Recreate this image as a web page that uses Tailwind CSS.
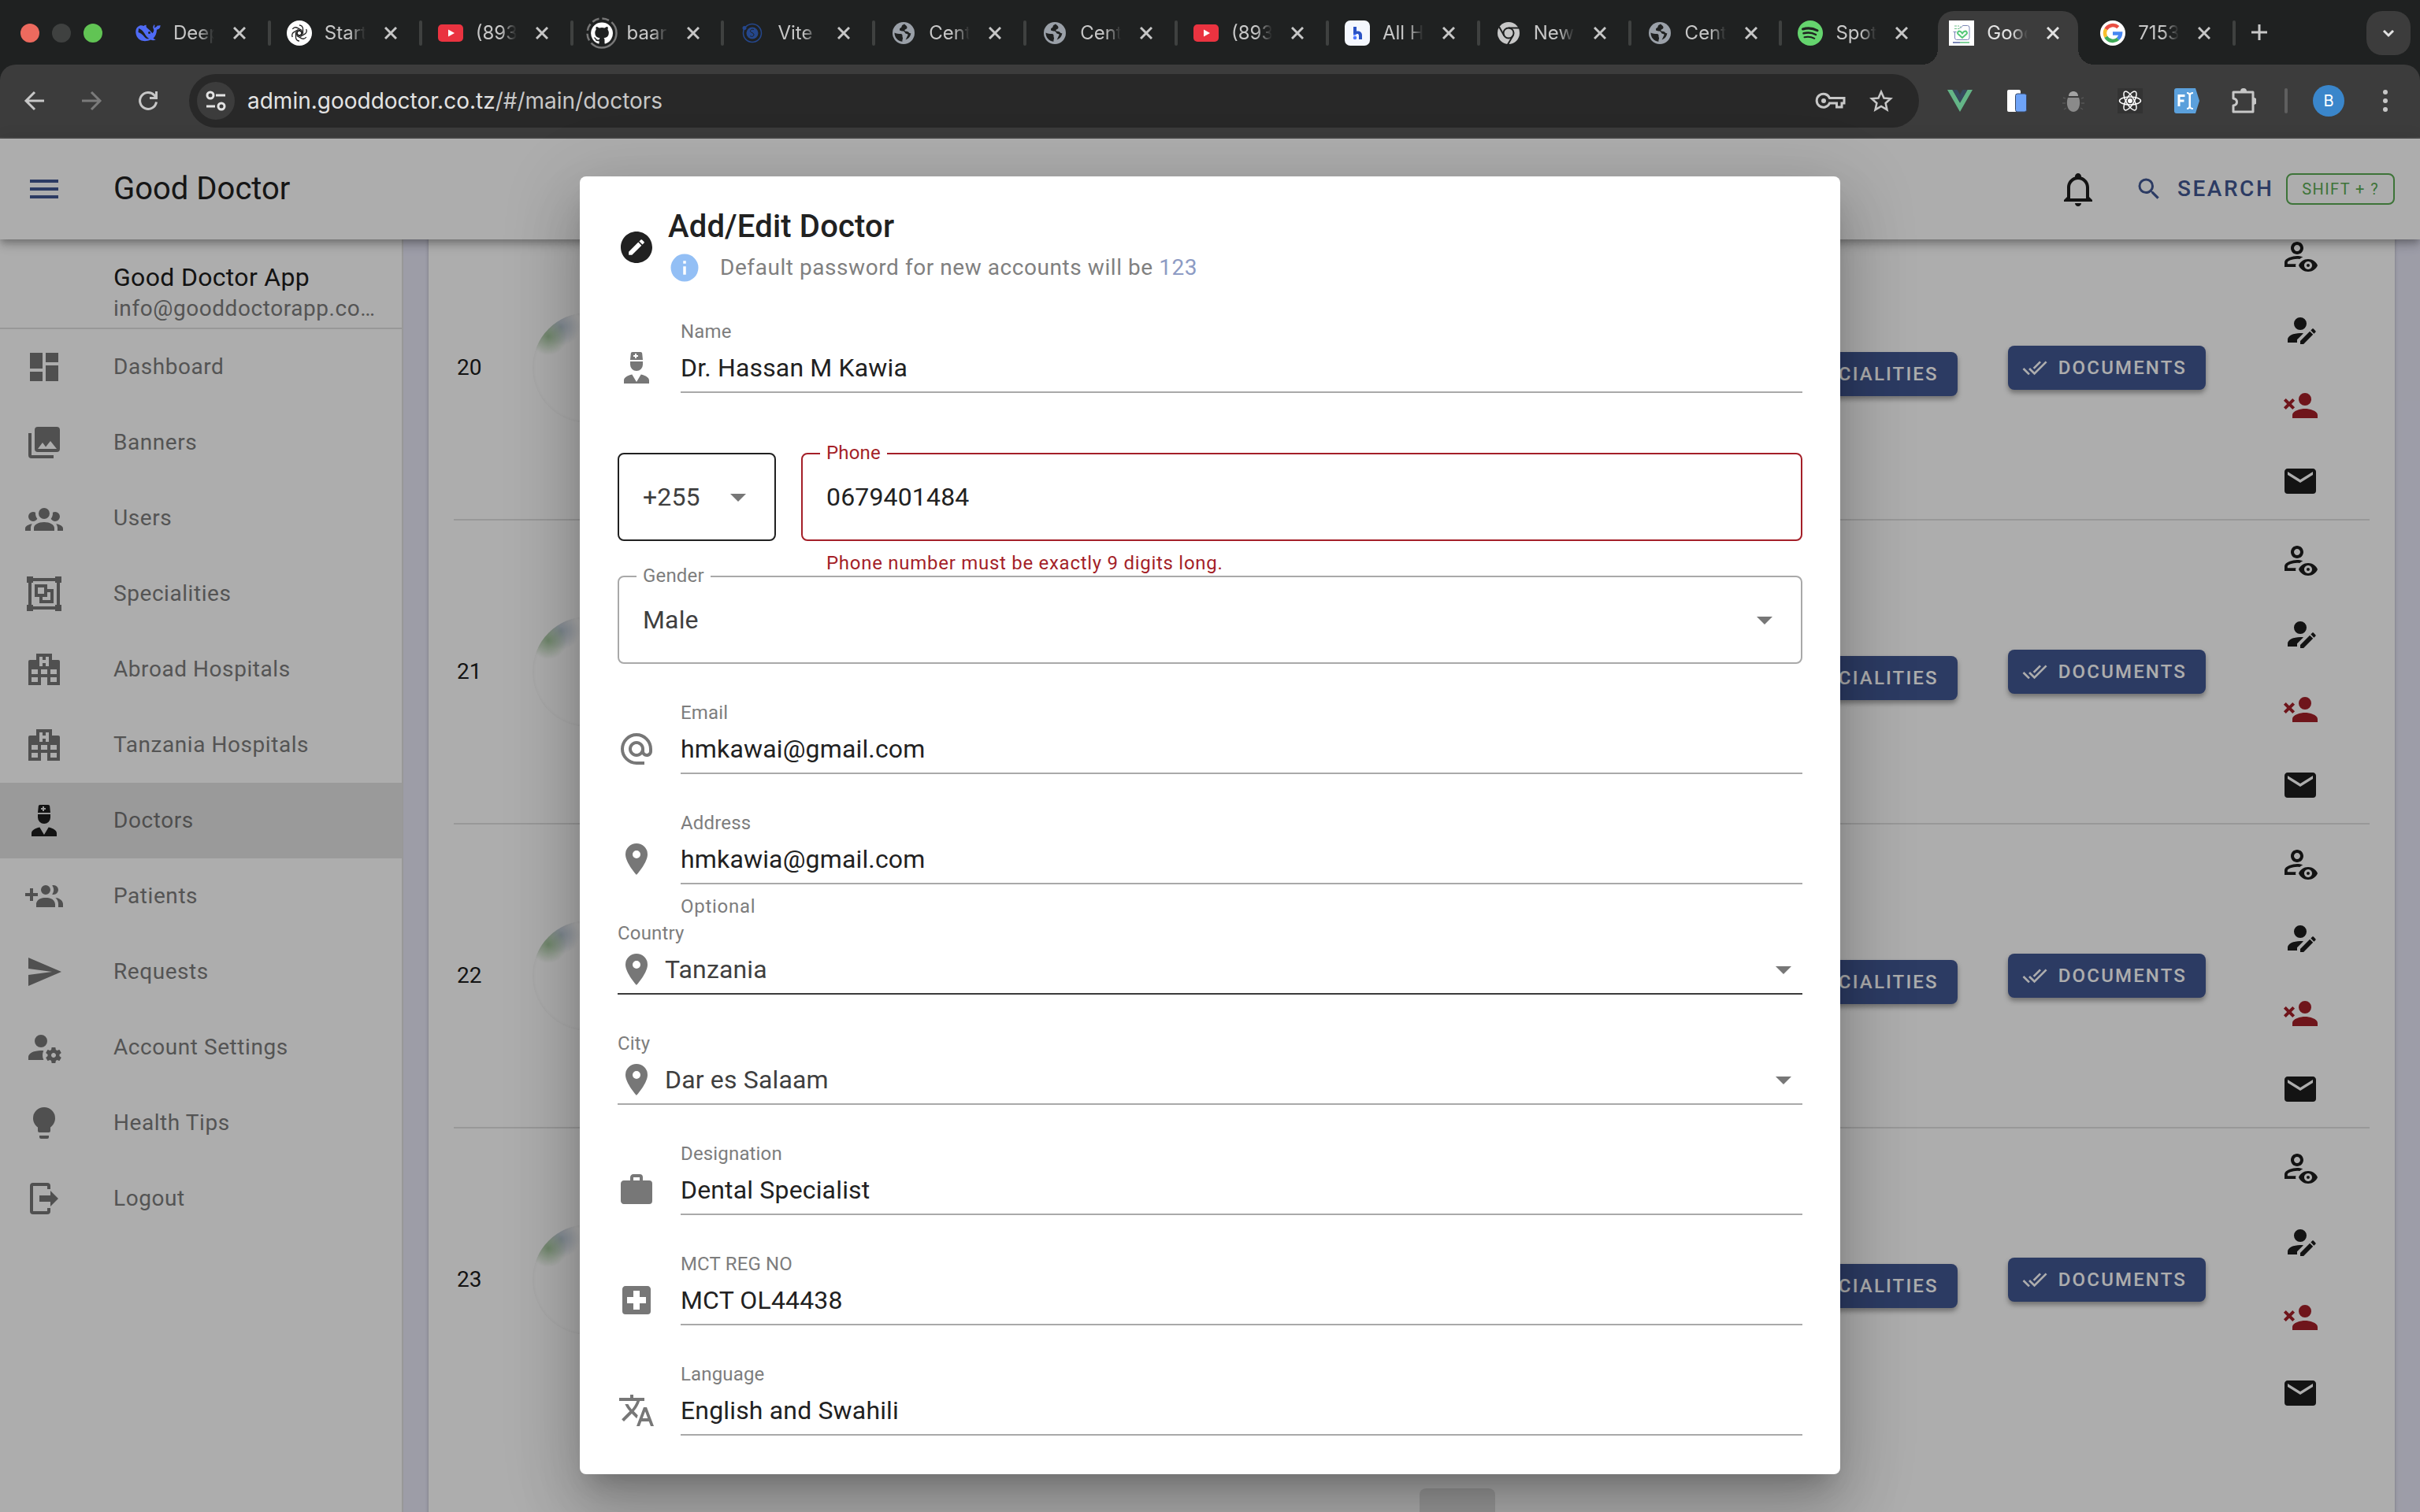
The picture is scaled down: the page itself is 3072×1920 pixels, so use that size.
<!DOCTYPE html>
<html lang="en">

<head>
  <meta charset="UTF-8">
  <meta name="viewport" content="width=device-width, initial-scale=1.0">
  <title>Good Doctor</title>
  <script src="https://cdn.jsdelivr.net/npm/@tailwindcss/browser@4"></script>
</head>

<body class="flex h-screen flex-col overflow-hidden bg-[#1f2121] font-['Roboto',sans-serif]">

  <!-- Icon sprite -->
  <svg class="hidden" aria-hidden="true">
    <symbol id="menu" viewBox="0 0 24 24"><path d="M3,6H21V8H3V6M3,11H21V13H3V11M3,16H21V18H3V16Z" /></symbol>
    <symbol id="bell" viewBox="0 0 24 24"><path d="M10 21H14C14 22.1 13.1 23 12 23S10 22.1 10 21M21 19V20H3V19L5 17V11C5 7.9 7.03 5.17 10 4.29C10 4.19 10 4.1 10 4C10 2.9 10.9 2 12 2S14 2.9 14 4C14 4.1 14 4.19 14 4.29C16.97 5.17 19 7.9 19 11V17L21 19M17 11C17 8.24 14.76 6 12 6S7 8.24 7 11V18H17V11Z" /></symbol>
    <symbol id="magnify" viewBox="0 0 24 24"><path d="M9.5,3A6.5,6.5 0 0,1 16,9.5C16,11.11 15.41,12.59 14.44,13.73L14.71,14H15.5L20.5,19L19,20.5L14,15.5V14.71L13.73,14.44C12.59,15.41 11.11,16 9.5,16A6.5,6.5 0 0,1 3,9.5A6.5,6.5 0 0,1 9.5,3M9.5,5C7,5 5,7 5,9.5C5,12 7,14 9.5,14C12,14 14,12 14,9.5C14,7 12,5 9.5,5Z" /></symbol>
    <symbol id="dashboard" viewBox="0 0 24 24"><path d="M13,3V9H21V3M13,21H21V11H13M3,21H11V15H3M3,13H11V3H3V13Z" /></symbol>
    <symbol id="images" viewBox="0 0 24 24"><path d="M22,16V4A2,2 0 0,0 20,2H8A2,2 0 0,0 6,4V16A2,2 0 0,0 8,18H20A2,2 0 0,0 22,16M11,12L13.03,14.71L16,11L20,16H8M2,6V20A2,2 0 0,0 4,22H18V20H4V6" /></symbol>
    <symbol id="users" viewBox="0 0 24 24"><path d="M12,5.5A3.5,3.5 0 0,1 15.5,9A3.5,3.5 0 0,1 12,12.5A3.5,3.5 0 0,1 8.5,9A3.5,3.5 0 0,1 12,5.5M5,8C5.56,8 6.08,8.15 6.53,8.42C6.38,9.85 6.8,11.27 7.66,12.38C7.16,13.34 6.16,14 5,14A3,3 0 0,1 2,11A3,3 0 0,1 5,8M19,8A3,3 0 0,1 22,11A3,3 0 0,1 19,14C17.84,14 16.84,13.34 16.34,12.38C17.2,11.27 17.62,9.85 17.47,8.42C17.92,8.15 18.44,8 19,8M5.5,18.25C5.5,16.18 8.41,14.5 12,14.5C15.59,14.5 18.5,16.18 18.5,18.25V20H5.5V18.25M0,20V18.5C0,17.11 1.89,15.94 4.45,15.6C3.86,16.28 3.5,17.22 3.5,18.25V20H0M24,20H20.5V18.25C20.5,17.22 20.14,16.28 19.55,15.6C22.11,15.94 24,17.11 24,18.5V20Z" /></symbol>
    <symbol id="group" viewBox="0 0 24 24"><path fill-rule="evenodd" d="M1,1V5H2V19H1V23H5V22H19V23H23V19H22V5H23V1H19V2H5V1M5,4H19V5H20V19H19V20H5V19H4V5H5M6,6V14H9V18H18V9H14V6M8,8H12V12H8M14,11H16V16H11V14H14" /></symbol>
    <symbol id="hospital" viewBox="0 0 24 24"><path d="M2,22V7A1,1 0 0,1 3,6H7V2H17V6H21A1,1 0 0,1 22,7V22H14V17H10V22H2M9,4V10H11V8H13V10H15V4H13V6H11V4H9M4,20H8V17H4V20M4,15H8V12H4V15M16,20H20V17H16V20M16,15H20V12H16V15M10,15H14V12H10V15Z" /></symbol>
    <symbol id="doctor" viewBox="0 0 24 24"><path d="M14.84,16.26C17.86,16.83 20,18.29 20,20V22H4V20C4,18.29 6.14,16.83 9.16,16.26L12,21L14.84,16.26M8,8H16V10A4,4 0 0,1 12,14A4,4 0 0,1 8,10V8M8,7L8.41,2.9C8.46,2.39 8.89,2 9.41,2H14.6C15.11,2 15.54,2.39 15.59,2.9L16,7H8M12,3H11V4H10V5H11V6H12V5H13V4H12V3Z" /></symbol>
    <symbol id="users-plus" viewBox="0 0 24 24"><path d="M19 17V19H7V17S7 13 13 13 19 17 19 17M16 8A3 3 0 1 0 13 11A3 3 0 0 0 16 8M19.2 13.06A5.6 5.6 0 0 1 21 17V19H24V17S24 13.55 19.2 13.06M18 5A2.91 2.91 0 0 0 17.11 5.14A5 5 0 0 1 17.11 10.86A2.91 2.91 0 0 0 18 11A3 3 0 0 0 18 5M8 10H5V7H3V10H0V12H3V15H5V12H8Z" /></symbol>
    <symbol id="send" viewBox="0 0 24 24"><path d="M2,21L23,12L2,3V10L17,12L2,14V21Z" /></symbol>
    <symbol id="user-cog" viewBox="0 0 24 24"><path d="M10 4A4 4 0 0 0 6 8A4 4 0 0 0 10 12A4 4 0 0 0 14 8A4 4 0 0 0 10 4M17 12C16.87 12 16.76 12.09 16.74 12.21L16.55 13.53C16.25 13.66 15.96 13.82 15.7 14L14.46 13.5C14.35 13.5 14.22 13.5 14.15 13.63L13.15 15.36C13.09 15.47 13.11 15.6 13.21 15.68L14.27 16.5C14.25 16.67 14.24 16.83 14.24 17C14.24 17.17 14.25 17.33 14.27 17.5L13.21 18.32C13.12 18.4 13.09 18.53 13.15 18.64L14.15 20.37C14.21 20.5 14.34 20.5 14.46 20.5L15.7 20C15.96 20.18 16.24 20.35 16.55 20.47L16.74 21.79C16.76 21.91 16.86 22 17 22H19C19.11 22 19.22 21.91 19.24 21.79L19.43 20.47C19.73 20.34 20 20.18 20.27 20L21.5 20.5C21.63 20.5 21.76 20.5 21.83 20.37L22.83 18.64C22.89 18.53 22.86 18.4 22.77 18.32L21.7 17.5C21.72 17.33 21.74 17.17 21.74 17C21.74 16.83 21.73 16.67 21.7 16.5L22.76 15.68C22.85 15.6 22.88 15.47 22.82 15.36L21.82 13.63C21.76 13.5 21.63 13.5 21.5 13.5L20.27 14C20 13.82 19.73 13.65 19.42 13.53L19.23 12.21C19.22 12.09 19.11 12 19 12H17M10 14C5.58 14 2 15.79 2 18V20H11.68A7 7 0 0 1 11 17A7 7 0 0 1 11.64 14.09C11.11 14.03 10.56 14 10 14M18 15.5C18.83 15.5 19.5 16.17 19.5 17C19.5 17.83 18.83 18.5 18 18.5C17.16 18.5 16.5 17.83 16.5 17C16.5 16.17 17.17 15.5 18 15.5Z" /></symbol>
    <symbol id="bulb" viewBox="0 0 24 24"><path d="M12,2A7,7 0 0,0 5,9C5,11.38 6.19,13.47 8,14.74V17A1,1 0 0,0 9,18H15A1,1 0 0,0 16,17V14.74C17.81,13.47 19,11.38 19,9A7,7 0 0,0 12,2M9,21A1,1 0 0,0 10,22H14A1,1 0 0,0 15,21V20H9V21Z" /></symbol>
    <symbol id="logout" viewBox="0 0 24 24"><path d="M14,2A2,2 0 0,1 16,4V6H14V4H5V20H14V18H16V20A2,2 0 0,1 14,22H5A2,2 0 0,1 3,20V4A2,2 0 0,1 5,2H14M9,10H16V7L21,12L16,17V14H9V10Z" /></symbol>
    <symbol id="check-all" viewBox="0 0 24 24"><path d="M0.41,13.41L6,19L7.41,17.58L1.83,12M22.24,5.58L11.66,16.17L7.5,12L6.07,13.41L11.66,19L23.66,7M18,7L16.59,5.58L10.24,11.93L11.66,13.34L18,7Z" /></symbol>
    <symbol id="user-eye" viewBox="0 0 24 24"><path fill-rule="evenodd" d="M10 4C12.21 4 14 5.79 14 8S12.21 12 10 12 6 10.21 6 8 7.79 4 10 4M10 6C8.9 6 8 6.9 8 8S8.9 10 10 10 12 9.1 12 8 11.1 6 10 6M9.2 20H2V17C2 14.34 7.33 13 10 13C11 13 12.4 13.2 13.7 13.6C12.9 14 12.2 14.5 11.6 15C11 14.93 10.5 14.9 10 14.9C7.03 14.9 3.9 16.36 3.9 17V18.1H9.3L9 19L9.2 20M17 18C17.56 18 18 18.44 18 19S17.56 20 17 20 16 19.56 16 19 16.44 18 17 18M17 15C14.27 15 11.94 16.66 11 19C11.94 21.34 14.27 23 17 23S22.06 21.34 23 19C22.06 16.66 19.73 15 17 15M17 21.5C15.62 21.5 14.5 20.38 14.5 19S15.62 16.5 17 16.5 19.5 17.62 19.5 19 18.38 21.5 17 21.5Z" /></symbol>
    <symbol id="user-edit" viewBox="0 0 24 24"><path d="M21.7,13.35L20.7,14.35L18.65,12.3L19.65,11.3C19.86,11.09 20.21,11.09 20.42,11.3L21.7,12.58C21.91,12.79 21.91,13.14 21.7,13.35M12,18.94L18.06,12.88L20.11,14.93L14.06,21H12V18.94M12,14C7.58,14 4,15.79 4,18V20H10V18.11L14,14.11C13.34,14.03 12.67,14 12,14M12,4A4,4 0 0,0 8,8A4,4 0 0,0 12,12A4,4 0 0,0 16,8A4,4 0 0,0 12,4Z" /></symbol>
    <symbol id="user-remove" viewBox="0 0 24 24"><path d="M15,14C12.33,14 7,15.33 7,18V20H23V18C23,15.33 17.67,14 15,14M15,12A4,4 0 0,0 19,8A4,4 0 0,0 15,4A4,4 0 0,0 11,8A4,4 0 0,0 15,12M5,9.59L7.12,7.46L8.54,8.88L6.41,11L8.54,13.12L7.12,14.54L5,12.41L2.88,14.54L1.46,13.12L3.59,11L1.46,8.88L2.88,7.46L5,9.59Z" /></symbol>
    <symbol id="email" viewBox="0 0 24 24"><path d="M20,8L12,13L4,8V6L12,11L20,6M20,4H4C2.89,4 2,4.89 2,6V18A2,2 0 0,0 4,20H20A2,2 0 0,0 22,18V6C22,4.89 21.1,4 20,4Z" /></symbol>
    <symbol id="pencil-circle" viewBox="0 0 24 24"><path d="M12,2C6.47,2 2,6.47 2,12C2,17.53 6.47,22 12,22C17.53,22 22,17.53 22,12C22,6.47 17.53,2 12,2M15.1,7.07C15.24,7.07 15.38,7.12 15.5,7.23L16.77,8.5C17,8.72 17,9.07 16.77,9.28L15.77,10.28L13.72,8.23L14.72,7.23C14.82,7.12 14.96,7.07 15.1,7.07M13.13,8.81L15.19,10.87L9.13,16.93H7.07V14.87L13.13,8.81Z" /></symbol>
    <symbol id="info" viewBox="0 0 24 24"><path d="M13,9H11V7H13M13,17H11V11H13M12,2A10,10 0 0,0 2,12A10,10 0 0,0 12,22A10,10 0 0,0 22,12A10,10 0 0,0 12,2Z" /></symbol>
    <symbol id="caret" viewBox="0 0 24 24"><path d="M7,10L12,15L17,10H7Z" /></symbol>
    <symbol id="at" viewBox="0 0 24 24"><path d="M12,15C12.81,15 13.5,14.7 14.11,14.11C14.7,13.5 15,12.81 15,12C15,11.19 14.7,10.5 14.11,9.89C13.5,9.3 12.81,9 12,9C11.19,9 10.5,9.3 9.89,9.89C9.3,10.5 9,11.19 9,12C9,12.81 9.3,13.5 9.89,14.11C10.5,14.7 11.19,15 12,15M12,2C14.75,2 17.1,3 19.05,4.95C21,6.9 22,9.25 22,12V13.45C22,14.45 21.65,15.3 21,16C20.3,16.67 19.5,17 18.5,17C17.3,17 16.31,16.5 15.56,15.5C14.56,16.5 13.38,17 12,17C10.63,17 9.45,16.5 8.46,15.54C7.5,14.55 7,13.38 7,12C7,10.63 7.5,9.45 8.46,8.46C9.45,7.5 10.63,7 12,7C13.37,7 14.55,7.5 15.54,8.46C16.5,9.45 17,10.63 17,12V13.45C17,13.86 17.16,14.22 17.46,14.53C17.76,14.84 18.11,15 18.5,15C18.92,15 19.27,14.84 19.57,14.53C19.87,14.22 20,13.86 20,13.45V12C20,9.81 19.23,7.93 17.65,6.35C16.07,4.77 14.19,4 12,4C9.81,4 7.93,4.77 6.35,6.35C4.77,7.93 4,9.81 4,12C4,14.19 4.77,16.07 6.35,17.65C7.93,19.23 9.81,20 12,20H17V22H12C9.25,22 6.9,21 4.95,19.05C3,17.1 2,14.75 2,12C2,9.25 3,6.9 4.95,4.95C6.9,3 9.25,2 12,2Z" /></symbol>
    <symbol id="marker" viewBox="0 0 24 24"><path d="M12,11.5A2.5,2.5 0 0,1 9.5,9A2.5,2.5 0 0,1 12,6.5A2.5,2.5 0 0,1 14.5,9A2.5,2.5 0 0,1 12,11.5M12,2A7,7 0 0,0 5,9C5,14.25 12,22 12,22C12,22 19,14.25 19,9A7,7 0 0,0 12,2Z" /></symbol>
    <symbol id="briefcase" viewBox="0 0 24 24"><path d="M10,2H14A2,2 0 0,1 16,4V6H20A2,2 0 0,1 22,8V19A2,2 0 0,1 20,21H4C2.89,21 2,20.1 2,19V8C2,6.89 2.89,6 4,6H8V4C8,2.89 8.89,2 10,2M14,6V4H10V6H14Z" /></symbol>
    <symbol id="medical-box" viewBox="0 0 24 24"><path d="M19,3H5C3.89,3 3,3.89 3,5V19A2,2 0 0,0 5,21H19A2,2 0 0,0 21,19V5C21,3.89 20.1,3 19,3M18,14H14V18H10V14H6V10H10V6H14V10H18" /></symbol>
    <symbol id="translate" viewBox="0 0 24 24"><path d="M12.87,15.07L10.33,12.56L10.36,12.53C12.1,10.59 13.34,8.36 14.07,6H17V4H10V2H8V4H1V6H12.17C11.5,7.92 10.44,9.75 9,11.35C8.07,10.32 7.3,9.19 6.69,8H4.69C5.42,9.63 6.42,11.17 7.67,12.56L2.58,17.58L4,19L9,14L12.11,17.11L12.87,15.07M18.5,10H16.5L12,22H14L15.12,19H19.87L21,22H23L18.5,10M15.88,17L17.5,12.67L19.12,17H15.88Z" /></symbol>

    <!-- Favicons -->
    <symbol id="fav-deepseek" viewBox="0 0 32 32"><path fill="#4f6bf6" d="M24 5c.6 1.600.6 2.800-.2 4.200 1.500-.2 3.200-1.200 4-2.700.6 0 1.800.2 3.700-.6.3 3-.9 5.100-4.500 5.900-.1 4.500-1.700 8.300-4.400 11 1 .8 2 1.200 3.200 1.400-2.100 1.400-4.300 1.500-6.500.3C12.500 27.600 5 26.500 1.800 20.500-.8 15-.2 8.500 5 6.700c1.900-.6 3.900-.3 5.600.3.600-.9 1.700-1.300 3.200-1.100-.6 1.500-.2 2.700 1.200 3.900 3 2.400 4.800 4.300 6.500 6.500 1.900-2.300 2.100-4 1.400-5.500C21.700 8.900 22.300 6.800 24 5z" /><path fill="#1f2121" d="M4 10c4.500 1.500 6.500 5 9 9 1.200 1.900 2.500 3 4.500 4.200-2.700.5-4.500-.4-6-2.200C9 17.500 6 15.500 3.500 15z" /><circle cx="17.500" cy="15.500" r="1.500" fill="#1f2121" /></symbol>
    <symbol id="fav-openai" viewBox="0 0 32 32"><circle cx="16" cy="16" r="16" fill="#fff" /><g fill="none" stroke="#222" stroke-width="1.300"><path d="M16 6a4.500 4.500 0 0 1 4.500 4.500v6.200L16 19.200l-4-2.300" /><path d="M16 6a4.500 4.500 0 0 1 4.500 4.500v6.200L16 19.200l-4-2.300" transform="rotate(60 16 16)" /><path d="M16 6a4.500 4.500 0 0 1 4.500 4.500v6.200L16 19.200l-4-2.300" transform="rotate(120 16 16)" /><path d="M16 6a4.500 4.500 0 0 1 4.500 4.500v6.200L16 19.200l-4-2.300" transform="rotate(180 16 16)" /><path d="M16 6a4.500 4.500 0 0 1 4.500 4.500v6.200L16 19.200l-4-2.300" transform="rotate(240 16 16)" /><path d="M16 6a4.500 4.500 0 0 1 4.500 4.500v6.200L16 19.200l-4-2.300" transform="rotate(300 16 16)" /></g></symbol>
    <symbol id="fav-youtube" viewBox="0 0 32 32"><rect y="5" width="32" height="22" rx="5" fill="#ea3340" /><path fill="#fff" d="M13 11.500v9l8-4.500z" /></symbol>
    <symbol id="fav-github" viewBox="-4 -4 40 40"><circle cx="16" cy="16" r="18.500" fill="none" stroke="#777" stroke-width="2.500" stroke-dasharray="44 4 9 4 9 4 9 4 9 4" /><path fill="#fff" d="M16 2.500a13.800 13.800 0 0 0-4.400 26.900c.7.1 1-.3 1-.7v-2.500c-3.900.8-4.700-1.700-4.700-1.700-.6-1.600-1.500-2-1.500-2-1.300-.9.1-.9.1-.9 1.400.1 2.100 1.400 2.100 1.400 1.300 2.100 3.300 1.500 4.100 1.200.1-.9.500-1.500.9-1.900-3.100-.4-6.300-1.500-6.300-6.800 0-1.500.5-2.700 1.400-3.700-.1-.4-.6-1.800.1-3.700 0 0 1.200-.4 3.800 1.400a13 13 0 0 1 6.900 0c2.600-1.800 3.800-1.400 3.800-1.400.8 1.900.3 3.300.1 3.700.9 1 1.400 2.200 1.400 3.700 0 5.300-3.200 6.400-6.300 6.800.5.400 1 1.300 1 2.600v3.800c0 .4.200.8 1 .7A13.800 13.800 0 0 0 16 2.500z" /></symbol>
    <symbol id="fav-orbit" viewBox="0 0 32 32"><circle cx="16" cy="16" r="11.500" fill="none" stroke="#25478c" stroke-width="1.500" /><circle cx="16" cy="16" r="7.500" fill="#25478c" /><path fill="none" stroke="#1f2121" d="M18 11.500c-3-1-5 .8-4.500 2.500s4.500 1.500 4.500 4-3 3-5 1.500" /><circle cx="6" cy="9.500" r="2.500" fill="#25478c" /></symbol>
    <symbol id="fav-globe" viewBox="0 0 32 32"><circle cx="16" cy="16" r="14" fill="#9aa0a8" /><path fill="#1f2121" d="M17 4.500c-1.500 1-3.500 1.300-3.500 3.500 0 1.500-2.500 1-2.500 3.500 0 2 2.500 1.800 4.500 2 2.500.2 2 3.500 4.500 3.500 2 0 1.800 1.500.8 3-1 1.300-.8 2.500-2.300 4.500 3.500-1 6.500-4.500 6.800-8.500-1.500.8-2.300-.6-3.300-1.500-1.500-1.300-3.500 0-4.500-1.500-1-2 3-1.500 3-4 0-1.800-1.500-2.500-3.500-4.500zM4.500 15.500c1.800 1.500 5.500 1.300 8 1.500 3 .3 1.500 3.500 2.500 5 .6 1-1 2.300-.5 4.800C9 26.500 4.300 21.500 4.500 15.500z" /></symbol>
    <symbol id="fav-hostinger" viewBox="0 0 32 32"><rect width="32" height="32" rx="7" fill="#f4f7fe" /><path fill="#2a52c4" d="M11 8h4v5.500h1c4 0 6 2 6 5.500v5h-4v-4.500c0-2-.8-2.500-2.500-2.500H11z" /><path fill="#4f78ff" d="M11 17h4c0 1.500-1.500 2-4 2z" /><circle cx="13" cy="22" r="2.300" fill="#4f78ff" /></symbol>
    <symbol id="fav-chrome" viewBox="0 0 32 32"><circle cx="16" cy="16" r="14" fill="#c7c7c7" /><g fill="none" stroke="#1f2121" stroke-width="2"><circle cx="16" cy="16" r="6.500" /><path d="M16 9.500h13M10.400 19.300L4 8M21.600 19.300L15 30.500" /></g></symbol>
    <symbol id="fav-spotify" viewBox="0 0 32 32"><circle cx="16" cy="16" r="16" fill="#65d46e" /><g fill="none" stroke="#1f2121" stroke-linecap="round"><path stroke-width="3" d="M6.500 11c6-1.800 13-1.200 18.500 1.800" /><path stroke-width="2.500" d="M7.500 16.300c5-1.400 11-.9 15.500 1.700" /><path stroke-width="2" d="M8.500 21.200c4.300-1 8.800-.6 12.800 1.600" /></g></symbol>
    <symbol id="fav-good" viewBox="0 0 32 32"><path fill="#fff" d="M0 0h32v32H0z" /><g fill="none" stroke-width="1"><path stroke="#7a86b5" d="M14.500 10l3-3.500h6a2.500 2.500 0 0 1 2.500 2.500v13a2.500 2.500 0 0 1-2.500 2.500h-14A2.500 2.500 0 0 1 7.500 22v-7M5.500 14.500h4" /><path stroke="#6fc18a" d="M7 7h6M7 10.500h5c2 0 2.500-1.500 2.500-3" stroke-dasharray="3 1" /><path stroke="#55c878" stroke-width="2" d="M17 22l-5.500-5c-1.500-1.500.5-4 2.500-3.200 1.500.4 2 1.400 3 2.700 1-1.300 1.500-2.300 3-2.700 2-.8 4 1.700 2.500 3.200z" /></g><path fill="#7a86b5" d="M5 27h9v2H5z" /><path fill="#7fd09a" d="M14 27h12v2H14z" /></symbol>
    <symbol id="fav-google" viewBox="0 0 32 32"><circle cx="16" cy="16" r="16" fill="#fff" /><g fill="none" stroke-width="4.500"><path stroke="#ea4f43" d="M7.300 11.200A10 10 0 0 1 22.800 8.700" /><path stroke="#f8c02c" d="M7.300 20.800A10 10 0 0 1 7.300 11.200" /><path stroke="#3fab58" d="M22.700 23.400A10 10 0 0 1 7.300 20.800" /><path stroke="#4787f2" d="M16 16.500h10A10 10 0 0 1 22.500 23.400" /></g></symbol>
  </svg>

  <!-- Tab strip -->
  <div class="flex h-[82px] shrink-0 items-center pt-0.5 font-['Inter',sans-serif]">
    <div class="flex w-[150px] shrink-0 gap-4 pl-[26px]">
      <button class="size-6 rounded-full bg-[#ed6a5e]" aria-label="Close window"></button>
      <button class="size-6 rounded-full bg-[#3f4140]" aria-label="Minimize window"></button>
      <button class="size-6 rounded-full bg-[#61c454]" aria-label="Zoom window"></button>
    </div>
    <div id="tabs" class="flex w-[2686px] self-stretch"></div>
    <button class="ml-5 size-6" aria-label="New tab">
      <svg viewBox="0 0 24 24" class="size-6" fill="none" stroke="#c7c7c7" stroke-width="3"><path d="M12 1v20M2 11h20" /></svg>
    </button>
    <button class="mr-3 ml-auto flex size-14 items-center justify-center rounded-[20px] bg-[#3c3c3c]" aria-label="Search tabs">
      <svg viewBox="0 0 24 24" class="size-6" fill="none" stroke="#e3e3e3" stroke-width="3"><path d="M6 9l6 6 6-6" /></svg>
    </button>
  </div>

  <!-- Address bar row -->
  <div class="flex h-[94px] shrink-0 items-center rounded-t-[20px] border-b-2 border-[#484848] bg-[#3c3c3c] pr-7 pl-7 font-['Inter',sans-serif]">
    <div class="flex gap-10">
      <button aria-label="Back"><svg viewBox="0 0 32 32" class="size-8" fill="none" stroke="#c7c7c7" stroke-width="3"><path d="M28 16H6M16 5L5 16l11 11" /></svg></button>
      <button aria-label="Forward"><svg viewBox="0 0 32 32" class="size-8" fill="none" stroke="#7b7b7b" stroke-width="3"><path d="M4 16h22M16 5l11 11-11 11" /></svg></button>
      <button aria-label="Reload"><svg viewBox="0 0 32 32" class="size-8" fill="none" stroke="#c7c7c7" stroke-width="3"><path d="M26.500 17.500A10.500 10.500 0 1 1 24 9l2.500 3M26.500 4v8.500H18" /></svg></button>
    </div>
    <div class="ml-9 flex h-[68px] flex-1 items-center rounded-full bg-[#282828] pr-8 pl-2.5">
      <button class="flex size-12 items-center justify-center rounded-full bg-[#3c3c3c]" aria-label="Site information">
        <svg viewBox="0 0 32 32" class="size-8" fill="none" stroke="#e3e3e3" stroke-width="3"><circle cx="9" cy="9" r="4" /><path d="M16 9h12M4 23h11" /><circle cx="23" cy="23" r="4" /></svg>
      </button>
      <div class="flex-1 pl-4 text-[28px] text-[#c7c7c7]"><span class="text-[#e3e3e3]">admin.gooddoctor.co.tz</span>/#/main/doctors</div>
      <button aria-label="Passwords">
        <svg viewBox="0 0 40 32" class="h-8 w-10" fill="none" stroke="#c7c7c7" stroke-width="3"><path d="M18.500 12.500H37v6.500h-3v5h-6.500v-5h-9a8.500 8.500 0 1 1 0-6.500z" /><circle cx="11" cy="16" r="3" fill="#c7c7c7" stroke="none" /></svg>
      </button>
      <button class="ml-7" aria-label="Bookmark">
        <svg viewBox="0 0 32 32" class="size-8" fill="none" stroke="#c7c7c7" stroke-width="2.500"><path d="M16 4.500l3.500 8 8.500.8-6.400 5.700 1.900 8.400L16 23l-7.500 4.400 1.900-8.400L4 13.300l8.500-.8z" /></svg>
      </button>
    </div>
    <div class="ml-9 flex items-center gap-10">
      <button aria-label="Vue devtools"><svg viewBox="0 0 32 32" class="size-8"><path fill="#64b587" d="M0 2h6.500L16 18.500 25.500 2H32L16 30z" /><path fill="#35495e" d="M6.500 2h6L16 8l3.500-6h6L16 18.500z" /></svg></button>
      <button aria-label="Reader"><svg viewBox="0 0 32 32" class="size-8"><path fill="#fff" d="M6 2h13a2 2 0 0 1 2 2v26H6a2 2 0 0 1-2-2V4a2 2 0 0 1 2-2z" /><rect x="14.500" y="7" width="14" height="23" rx="2.500" fill="#6ea3f7" stroke="#3a4a68" /></svg></button>
      <button aria-label="Bug reporter"><svg viewBox="0 0 32 32" class="size-8"><path fill="#a3a3a3" d="M10 10c0-8 12-8 12 0z" /><path fill="#8a8a8a" d="M9 12h14c3 8 0 18-7 18S6 20 9 12z" /><path fill="none" stroke="#555" stroke-width="1.500" d="M6 13l-3-1M6 19H2M7 25l-3 2M26 13l3-1M26 19h4M25 25l3 2" /></svg></button>
      <button aria-label="React devtools"><svg viewBox="0 0 32 32" class="size-8"><path fill="#333" d="M0 0h32v32H0z" /><g fill="none" stroke="#fff" stroke-width="1.500"><ellipse cx="16" cy="16" rx="13.500" ry="5" /><ellipse cx="16" cy="16" rx="13.500" ry="5" transform="rotate(60 16 16)" /><ellipse cx="16" cy="16" rx="13.500" ry="5" transform="rotate(120 16 16)" /></g><circle cx="16" cy="16" r="3" fill="#fff" /></svg></button>
      <button aria-label="Form filler"><svg viewBox="0 0 32 32" class="size-8"><path fill="#5ba0dc" d="M3 0h24l5 16-5 16H3a3 3 0 0 1-3-3V3a3 3 0 0 1 3-3z" /><g fill="none" stroke="#fff"><path stroke-width="3" d="M13.500 9.500H6V23M6 16h6.500" /><path stroke-width="2" d="M16 6c2 0 3.500 1 3.500 3v14c0 2-1.500 3-3.500 3M24 6c-2 0-4 1-4 3v14c0 2 2 3 4 3" /></g></svg></button>
      <button aria-label="Extensions"><svg viewBox="0 0 32 32" class="size-8" fill="none" stroke="#c7c7c7" stroke-width="3" stroke-linejoin="round"><path d="M3 5h25v25H3v-8c6-1 6-8 0-9z" /><path fill="#c7c7c7" stroke="none" d="M12 4a4 4 0 0 1 8 0zM29 12a4 4 0 0 1 0 9z" /></svg></button>
    </div>
    <div class="ml-9 h-8 w-1 rounded-full bg-[#5f5f5f]"></div>
    <button class="ml-8 flex size-10 items-center justify-center rounded-full bg-[#3a86cb] text-xl text-white">B</button>
    <button class="ml-9" aria-label="Menu"><svg viewBox="0 0 32 32" class="size-8" fill="#c7c7c7"><circle cx="16" cy="5" r="3" /><circle cx="16" cy="16" r="3" /><circle cx="16" cy="27" r="3" /></svg></button>
  </div>

  <!-- App -->
  <div class="relative flex min-h-0 flex-1 flex-col bg-white">
    <header class="relative z-10 flex h-32 shrink-0 items-center bg-white px-8 shadow-[0_4px_8px_-2px_rgba(0,0,0,0.2),0_8px_10px_rgba(0,0,0,0.14),0_2px_20px_rgba(0,0,0,0.12)]">
      <button aria-label="Toggle navigation"><svg class="size-12 fill-[#425793]"><use href="#menu" /></svg></button>
      <h1 class="ml-16 flex-1 text-[40px] text-[#212121]">Good Doctor</h1>
      <button aria-label="Notifications"><svg class="size-12 fill-[#1c1c1c]"><use href="#bell" /></svg></button>
      <button class="ml-12 flex items-center text-[28px] font-medium tracking-[0.09em] text-[#425793]">
        <svg class="mr-[18px] size-9 fill-[#425793]"><use href="#magnify" /></svg>
        SEARCH
        <span class="ml-4 flex h-10 items-center rounded-lg border-2 border-[#5bab53] px-[18px] text-xl font-normal tracking-[0.07em] text-[#5bab53]">SHIFT + ?</span>
      </button>
    </header>

    <div class="flex min-h-0 flex-1">
      <nav class="w-[512px] shrink-0 border-r-2 border-[#e0e0e0] bg-white">
        <div class="flex h-[114px] flex-col justify-end border-b-2 border-[#e0e0e0] pb-1 pr-8 pl-36">
          <div class="text-[32px] leading-10 tracking-[0.01em] text-[#1c1c1c]">Good Doctor App</div>
          <div class="truncate text-[28px] leading-10 tracking-[0.02em] text-[#7d7d7d]">info@gooddoctorapp.co.tz</div>
        </div>
        <div id="nav-items"></div>
      </nav>

      <main class="min-w-0 flex-1 overflow-hidden bg-[#e7e7f7] px-8">
        <div class="min-h-full bg-white px-8 shadow-[0_0_4px_rgba(0,0,0,0.25)]">
          <table class="-mt-[29px] w-full border-separate border-spacing-0">
            <tbody id="doctor-rows"></tbody>
          </table>
          <div class="flex justify-center gap-5 pt-[71px]">
            <button class="size-24 rounded-lg" aria-label="Previous page"></button>
            <button class="size-24 rounded-lg" aria-label="Page 1"></button>
            <button class="size-24 rounded-lg bg-black/12" aria-label="Page 2"></button>
            <button class="size-24 rounded-lg" aria-label="Next page"></button>
          </div>
        </div>
      </main>
    </div>

    <!-- Add/Edit dialog -->
    <div class="absolute inset-0 z-20 flex justify-center bg-black/32 p-12">
      <form class="w-full max-w-[1600px] overflow-hidden rounded-lg bg-white px-12 pt-10 tracking-[0.01em] shadow-[0_22px_30px_-14px_rgba(0,0,0,0.2),0_48px_76px_6px_rgba(0,0,0,0.14),0_18px_92px_16px_rgba(0,0,0,0.12)]">
        <div class="flex gap-4 pb-[35px]">
          <svg class="mt-[26px] size-12 fill-[#212121]"><use href="#pencil-circle" /></svg>
          <div>
            <h2 class="text-[40px] leading-12 font-medium text-[#212121]">Add/Edit Doctor</h2>
            <div class="flex h-14 items-center gap-6 text-[28px] tracking-[0.02em] text-[#808080]">
              <svg class="size-[42px] fill-[#93bff5]"><use href="#info" /></svg>
              <p>Default password for new accounts will be <span class="text-[#8d9bc4]">123</span></p>
            </div>
          </div>
        </div>

        <div class="flex gap-8 pb-11">
          <svg class="mt-10 size-12 fill-[#777777]"><use href="#doctor" /></svg>
          <div class="flex-1 border-b-2 border-[#a9a9a9] pb-0.5">
            <label for="name" class="block text-2xl leading-9 text-[#7d7d7d]">Name</label>
            <input id="name" type="text" value="Dr. Hassan M Kawia" class="block h-14 w-full text-[32px] text-[#212121] outline-none">
          </div>
        </div>

        <div class="flex gap-8 pt-8">
          <div class="relative flex h-28 w-[201px] items-center rounded-lg border-2 border-[#212121]">
            <select aria-label="Country code" class="h-full w-full appearance-none pl-[30px] text-[32px] text-[#3f3f3f] outline-none">
              <option>+255</option>
            </select>
            <svg class="pointer-events-none absolute right-[22px] size-12 fill-[#777777]"><use href="#caret" /></svg>
          </div>
          <div class="flex-1">
            <div class="relative h-28 rounded-lg border-2 border-[#a41f28]">
              <label for="phone" class="absolute -top-3.5 left-[22px] bg-white px-2 text-2xl leading-6 text-[#a41f28]">Phone</label>
              <input id="phone" type="tel" value="0679401484" class="h-full w-full px-[30px] text-[32px] text-[#212121] outline-none">
            </div>
            <p class="h-11 pt-4 pl-8 text-2xl leading-6 tracking-[0.03em] text-[#a41f28]">Phone number must be exactly 9 digits long.</p>
          </div>
        </div>

        <div class="pb-11">
          <div class="relative flex h-28 items-center rounded-lg border-2 border-[#a9a9a9]">
            <label for="gender" class="absolute -top-3.5 left-[22px] bg-white px-2 text-2xl leading-6 text-[#7d7d7d]">Gender</label>
            <select id="gender" class="h-full w-full appearance-none pl-[30px] text-[32px] text-[#3f3f3f] outline-none">
              <option>Male</option>
            </select>
            <svg class="pointer-events-none absolute right-[22px] size-12 fill-[#777777]"><use href="#caret" /></svg>
          </div>
        </div>

        <div class="flex gap-8 pb-11">
          <svg class="mt-10 size-12 fill-[#777777]"><use href="#at" /></svg>
          <div class="flex-1 border-b-2 border-[#a9a9a9] pb-0.5">
            <label for="email-field" class="block text-2xl leading-9 text-[#7d7d7d]">Email</label>
            <input id="email-field" type="email" value="hmkawai@gmail.com" class="block h-14 w-full text-[32px] text-[#212121] outline-none">
          </div>
        </div>

        <div class="flex gap-8">
          <svg class="mt-10 size-12 fill-[#777777]"><use href="#marker" /></svg>
          <div class="flex-1">
            <div class="border-b-2 border-[#a9a9a9] pb-0.5">
              <label for="address" class="block text-2xl leading-9 text-[#7d7d7d]">Address</label>
              <input id="address" type="text" value="hmkawia@gmail.com" class="block h-14 w-full text-[32px] text-[#212121] outline-none">
            </div>
            <p class="h-11 pt-4 text-2xl leading-6 tracking-[0.03em] text-[#7d7d7d]">Optional</p>
          </div>
        </div>

        <div class="pb-11">
          <label for="country" class="block text-2xl leading-9 text-[#7d7d7d]">Country</label>
          <div class="flex items-center border-b-2 border-[#3b3b3b] pb-0.5">
            <svg class="size-12 fill-[#777777]"><use href="#marker" /></svg>
            <select id="country" class="h-14 flex-1 appearance-none pl-3 text-[32px] text-[#3f3f3f] outline-none">
              <option>Tanzania</option>
            </select>
            <svg class="pointer-events-none -ml-12 size-12 fill-[#777777]"><use href="#caret" /></svg>
          </div>
        </div>

        <div class="pb-11">
          <label for="city" class="block text-2xl leading-9 text-[#7d7d7d]">City</label>
          <div class="flex items-center border-b-2 border-[#a9a9a9] pb-0.5">
            <svg class="size-12 fill-[#777777]"><use href="#marker" /></svg>
            <select id="city" class="h-14 flex-1 appearance-none pl-3 text-[32px] text-[#3f3f3f] outline-none">
              <option>Dar es Salaam</option>
            </select>
            <svg class="pointer-events-none -ml-12 size-12 fill-[#777777]"><use href="#caret" /></svg>
          </div>
        </div>

        <div class="flex gap-8 pb-11">
          <svg class="mt-10 size-12 fill-[#777777]"><use href="#briefcase" /></svg>
          <div class="flex-1 border-b-2 border-[#a9a9a9] pb-0.5">
            <label for="designation" class="block text-2xl leading-9 text-[#7d7d7d]">Designation</label>
            <input id="designation" type="text" value="Dental Specialist" class="block h-14 w-full text-[32px] text-[#212121] outline-none">
          </div>
        </div>

        <div class="flex gap-8 pb-11">
          <svg class="mt-10 size-12 fill-[#777777]"><use href="#medical-box" /></svg>
          <div class="flex-1 border-b-2 border-[#a9a9a9] pb-0.5">
            <label for="mct" class="block text-2xl leading-9 text-[#7d7d7d]">MCT REG NO</label>
            <input id="mct" type="text" value="MCT OL44438" class="block h-14 w-full text-[32px] text-[#212121] outline-none">
          </div>
        </div>

        <div class="flex gap-8">
          <svg class="mt-10 size-12 fill-[#777777]"><use href="#translate" /></svg>
          <div class="flex-1 border-b-2 border-[#a9a9a9] pb-0.5">
            <label for="language" class="block text-2xl leading-9 text-[#7d7d7d]">Language</label>
            <input id="language" type="text" value="English and Swahili" class="block h-14 w-full text-[32px] text-[#212121] outline-none">
          </div>
        </div>
      </form>
    </div>
  </div>

  <script>
    const tabs = [
      ['fav-deepseek', 'Deep'], ['fav-openai', 'Start'], ['fav-youtube', '(893'], ['fav-github', 'baar'],
      ['fav-orbit', 'Vite'], ['fav-globe', 'Cent'], ['fav-globe', 'Cent'], ['fav-youtube', '(893'],
      ['fav-hostinger', 'All H'], ['fav-chrome', 'New'], ['fav-globe', 'Cent'], ['fav-spotify', 'Spot'],
      ['fav-good', 'Good'], ['fav-google', '7153']
    ];
    const activeTab = 12;

    document.getElementById('tabs').innerHTML = tabs.map(([icon, title], i) => {
      const active = i === activeTab;
      // No separator on either side of the active tab
      const separator = active || i === activeTab - 1 ? '' : '<div class="absolute -right-0.5 h-8 w-1 rounded-full bg-[#3f4140]"></div>';
      const shape = active ? `
        <div class="absolute top-3 right-1.5 bottom-0 left-2 rounded-t-[20px] bg-[#3c3c3c]"></div>
        <div class="absolute bottom-0 -left-3 size-5 bg-[radial-gradient(circle_at_0_0,transparent_20px,#3c3c3c_20px)]"></div>
        <div class="absolute -right-3.5 bottom-0 size-5 bg-[radial-gradient(circle_at_100%_0,transparent_20px,#3c3c3c_20px)]"></div>` : '';
      return `
      <div class="relative flex flex-1 items-center pl-[22px]">
        ${shape}
        <svg class="relative ${icon === 'fav-github' ? '-mx-1 size-10' : 'size-8'} shrink-0"><use href="#${icon}" /></svg>
        <div class="relative ml-4 w-16 text-2xl whitespace-nowrap mask-[linear-gradient(to_right,black_32px,transparent_52px)] ${active ? 'text-[#e3e3e3]' : 'text-[#c7c7c7]'}">${title}</div>
        <button class="relative ml-3 size-4" aria-label="Close tab"><svg viewBox="0 0 16 16" class="size-4" fill="none" stroke="${active ? '#e3e3e3' : '#c7c7c7'}" stroke-width="3"><path d="M1 1l14 14M15 1L1 15" /></svg></button>
        ${separator}
      </div>`;
    }).join('');

    const navItems = [
      ['dashboard', 'Dashboard'], ['images', 'Banners'], ['users', 'Users'], ['group', 'Specialities'],
      ['hospital', 'Abroad Hospitals'], ['hospital', 'Tanzania Hospitals'], ['doctor', 'Doctors'],
      ['users-plus', 'Patients'], ['send', 'Requests'], ['user-cog', 'Account Settings'],
      ['bulb', 'Health Tips'], ['logout', 'Logout']
    ];

    document.getElementById('nav-items').innerHTML = navItems.map(([icon, title]) => {
      const active = title === 'Doctors';
      return `
      <a href="#" class="flex h-24 items-center gap-16 pl-8 text-[28px] tracking-[0.02em] ${active ? 'bg-[#e4e4e4] fill-[#1c1c1c] text-[#747474]' : 'fill-[#777777] text-[#7d7d7d]'}">
        <svg class="size-12"><use href="#${icon}" /></svg>${title}
      </a>`;
    }).join('');

    document.getElementById('doctor-rows').innerHTML = [20, 21, 22, 23].map(n => `
      <tr class="h-[386px] *:border-b-2 *:border-[#e0e0e0] last:*:border-transparent">
        <td class="w-[100px] pl-1 text-[28px] text-[#1c1c1c]">${n}</td>
        <td>
          <div class="size-[140px] rounded-full bg-[radial-gradient(circle_at_20px_30px,#a3c69c,transparent_24px),radial-gradient(circle_at_36px_18px,#b9c6d6,transparent_24px)] shadow-[inset_0_0_4px_rgba(0,0,0,0.08)]"></div>
        </td>
        <td class="pt-4 pr-8">
          <button class="ml-auto flex h-14 items-center rounded-lg bg-[#425793] pr-6 pl-[18px] text-2xl font-medium tracking-[0.09em] text-white shadow-[0_4px_6px_rgba(0,0,0,0.35)]">
            <svg class="mr-3.5 size-8 fill-white"><use href="#check-all" /></svg>SPECIALITIES
          </button>
        </td>
        <td class="w-[314px] px-8">
          <button class="flex h-14 items-center rounded-lg bg-[#425793] pr-6 pl-[18px] text-2xl font-medium tracking-[0.09em] text-white shadow-[0_4px_6px_rgba(0,0,0,0.35)]">
            <svg class="mr-3.5 size-8 fill-white"><use href="#check-all" /></svg>DOCUMENTS
          </button>
        </td>
        <td class="w-44">
          <div class="flex flex-col items-center gap-12 fill-[#1c1c1c]">
            <button aria-label="View"><svg class="size-12"><use href="#user-eye" /></svg></button>
            <button aria-label="Edit"><svg class="size-12"><use href="#user-edit" /></svg></button>
            <button aria-label="Remove"><svg class="size-12 fill-[#a41f28]"><use href="#user-remove" /></svg></button>
            <button aria-label="Send email"><svg class="size-12"><use href="#email" /></svg></button>
          </div>
        </td>
      </tr>`).join('');
  </script>
</body>

</html>
